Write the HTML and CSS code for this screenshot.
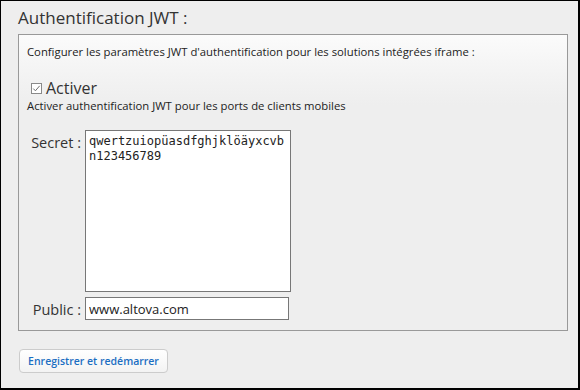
FILE: index.html
```html
<!DOCTYPE html>
<html lang="fr">
<head>
    <meta charset="UTF-8">
    <title>Authentification JWT</title>
    <link rel="stylesheet" href="styles.css">
</head>
<body>
    <div class="panel">
        <h2 class="panel-title">Authentification JWT :</h2>

        <div class="jwt-box">
            <p class="intro">Configurer les paramètres JWT d'authentification pour les solutions intégrées iframe :</p>

            <label class="enable-row">
                <span class="check">
                    <svg width="11" height="11" viewBox="0 0 11 11">
                        <rect x="0.5" y="0.5" width="10" height="10" fill="#fff" stroke="#8a8a8a"/>
                        <path d="M2.3 5.6 L4.4 7.8 L8.7 2.8" fill="none" stroke="#6f6f6f" stroke-width="1"/>
                    </svg>
                </span>
                Activer
            </label>
            <p class="hint">Activer authentification JWT pour les ports de clients mobiles</p>

            <div class="keys">
                <label class="key-label" for="secret">Secret :</label>
                <textarea id="secret" class="secret">qwertzuiopüasdfghjklöäyxcvbn123456789</textarea>

                <label class="key-label" for="public">Public :</label>
                <input id="public" class="public" type="text" value="www.altova.com">
            </div>
        </div>

        <button type="button" class="save-btn">Enregistrer et redémarrer</button>
    </div>
</body>
</html>
```

FILE: styles.css
```css
body {
    margin: 0;
    padding: 0;
    font-family: "Open Sans", Arial, sans-serif;
    color: #222;
}

/* Outer frame */
.panel {
    box-sizing: border-box;
    width: 580px;
    height: 390px;
    border: 1px solid #000;
    border-width: 1px 2px 2px 1px;
    background: #eeeeee;
    padding: 6px 10px 0 17px;
}

.panel-title {
    margin: 0;
    font-size: 17px;
    font-weight: normal;
    color: #333;
    line-height: 22px;
}

/* JWT settings box */
.jwt-box {
    margin-top: 5px;
    width: 550px;
    box-sizing: border-box;
    border: 1px solid #999;
    background: linear-gradient(#fbfbfb 0px, #f3f3f3 40px, #eeeeee 70px, #eeeeee 100%);
    padding: 9px 8px 10px 8px;
}

.intro, .hint {
    margin: 0;
    font-size: 11.3px;
    line-height: 16px;
}

.enable-row {
    display: flex;
    align-items: center;
    gap: 4px;
    margin: 18px 0 0 4px;
    font-size: 16px;
    line-height: 20px;
    color: #333;
}

.check {
    display: flex;
}

/* Secret / Public keys */
.keys {
    display: grid;
    grid-template-columns: 50px auto;
    column-gap: 4px;
    row-gap: 5px;
    margin-top: 16px;
    margin-left: 4px;
    justify-items: start;
}

.key-label {
    justify-self: end;
    white-space: nowrap;
    padding-top: 3px;
    font-size: 14.5px;
    line-height: 20px;
    color: #333;
}

.secret {
    box-sizing: border-box;
    width: 206px;
    height: 162px;
    margin: 0;
    padding: 3px 3px;
    border: 1px solid #777;
    background: #fff;
    resize: none;
    font-family: "DejaVu Sans Mono", monospace;
    font-size: 12px;
    line-height: 15px;
    color: #222;
    overflow: hidden;
}

.public {
    box-sizing: border-box;
    width: 204px;
    height: 23px;
    margin: 0;
    padding: 0 3px;
    border: 1px solid #777;
    background: #fff;
    font-family: "Open Sans", Arial, sans-serif;
    font-size: 13px;
    color: #222;
}

/* Save button */
.save-btn {
    margin-top: 18px;
    margin-left: 1px;
    width: 149px;
    height: 24px;
    border: 1px solid #cccccc;
    border-radius: 4px;
    background: linear-gradient(#ffffff, #f3f3f3);
    font-family: "Open Sans", Arial, sans-serif;
    font-size: 10.5px;
    font-weight: 600;
    color: #1b6ec2;
    cursor: pointer;
    padding: 0;
}
```
